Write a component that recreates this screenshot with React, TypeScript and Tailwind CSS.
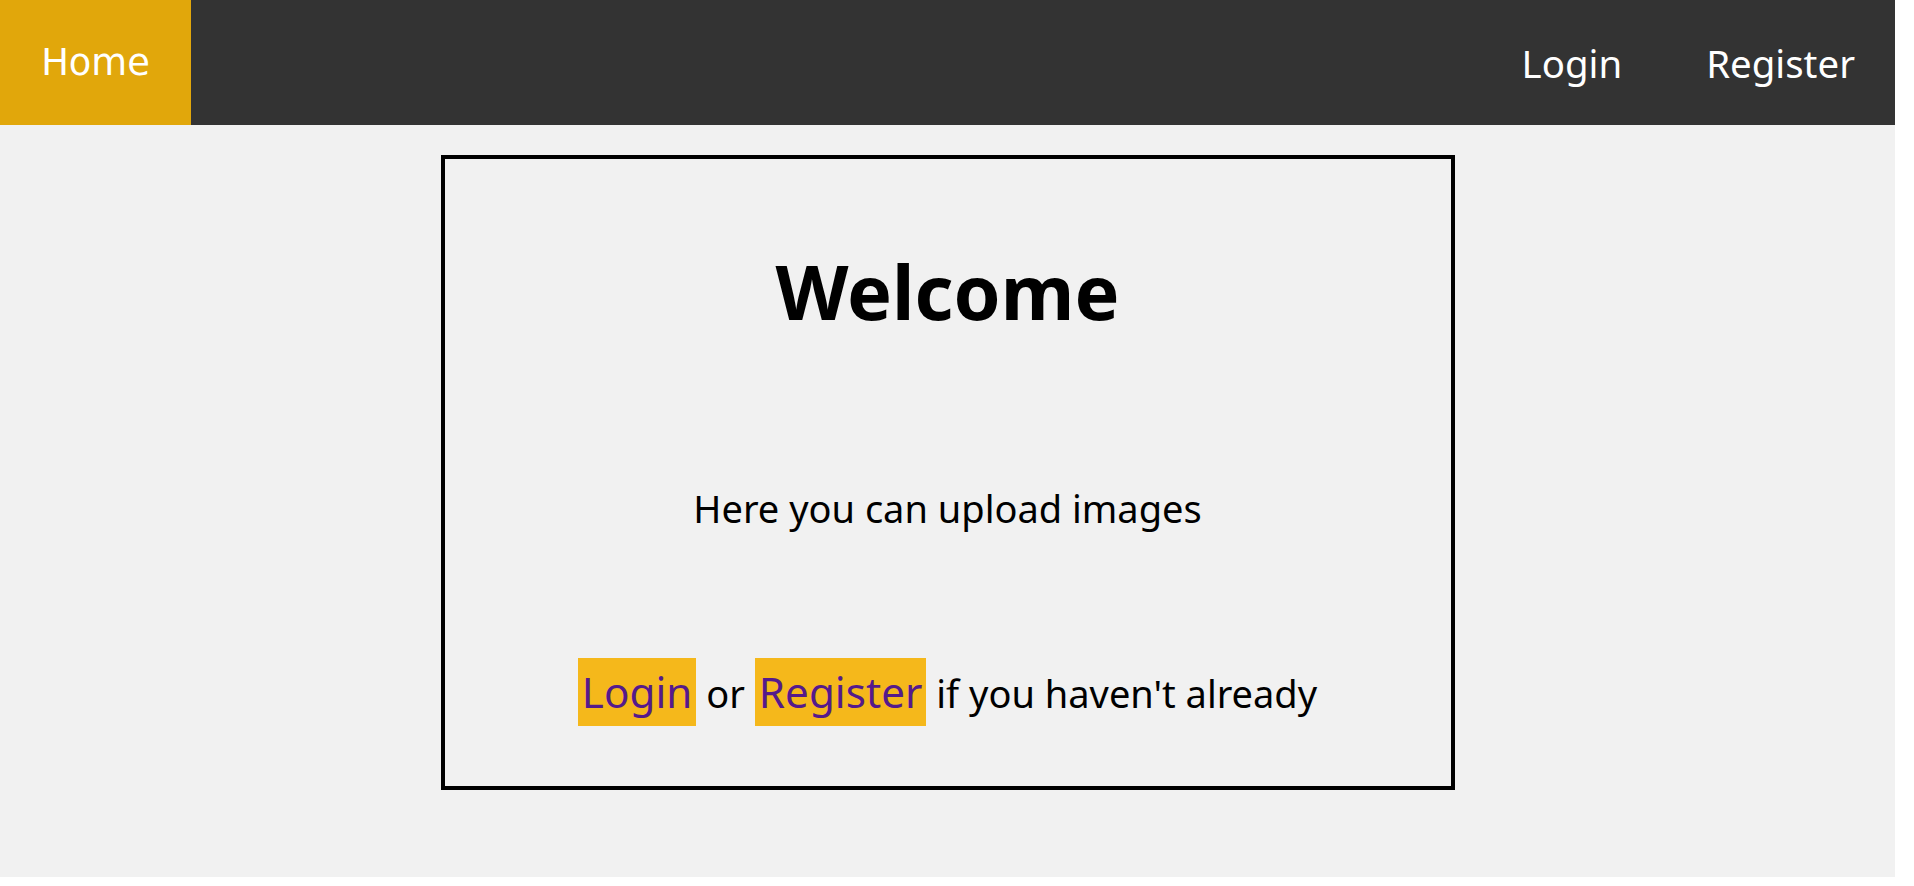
import React from 'react';

const NavLink: React.FC<{ label: string; extra?: string }> = ({ label, extra = 'px-[40px]' }) => (
  <a href="#" className={`h-full flex items-center text-white ${extra}`}>
    {label}
  </a>
);

export default function App() {
  return (
    <div className="w-[1895px] h-[877px] bg-[#f1f1f1] text-black leading-[normal] font-['Noto_Sans',sans-serif]">
      <nav className="h-[125px] bg-[#333333] flex items-stretch text-[38.4px]">
        <a
          href="#"
          className="w-[191px] h-full flex items-center justify-center bg-[#e1a70b] text-white text-[36.8px] font-['DejaVu_Sans',sans-serif]"
        >
          Home
        </a>
        <div className="ml-auto flex items-stretch">
          <NavLink label="Login" extra="pl-[40px] pr-[44px]" />
          <NavLink label="Register" />
        </div>
      </nav>

      <main className="mt-[30px] mx-auto w-[1014px] h-[635px] border-4 border-black flex flex-col items-center">
        <h1 className="mt-[80px] text-[75.5px] font-bold">Welcome</h1>
        <p className="mt-[140px] text-[38px]">Here you can upload images</p>
        <p className="mt-[129px] text-[38px]">
          <a href="#" className="bg-[#f5b81b] text-[#551a8b] text-[42.2px] px-[4px] pt-[5px] pb-[6px]">
            Login
          </a>{' '}
          or{' '}
          <a href="#" className="bg-[#f5b81b] text-[#551a8b] text-[42.2px] px-[4px] pt-[5px] pb-[6px]">
            Register
          </a>{' '}
          if you haven't already
        </p>
      </main>
    </div>
  );
}
